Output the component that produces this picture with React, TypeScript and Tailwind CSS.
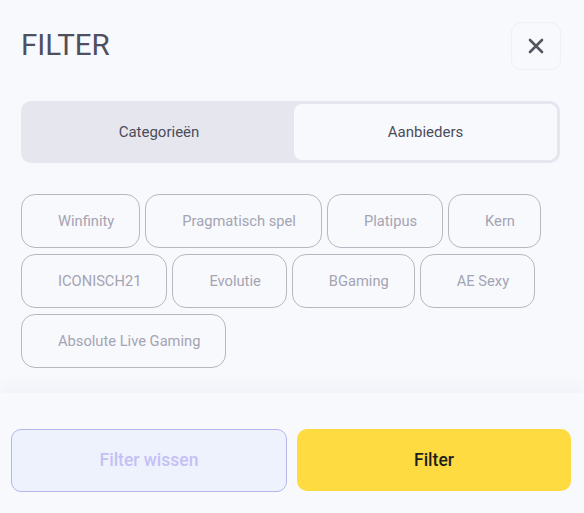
import { useState } from 'react';

const providers = [
  'Winfinity',
  'Pragmatisch spel',
  'Platipus',
  'Kern',
  'ICONISCH21',
  'Evolutie',
  'BGaming',
  'AE Sexy',
  'Absolute Live Gaming',
];

const App = () => {
  const [tab, setTab] = useState<'cat' | 'prov'>('prov');
  const [selected, setSelected] = useState<string[]>([]);

  const toggle = (name: string) => {
    setSelected((s) => (s.includes(name) ? s.filter((x) => x !== name) : [...s, name]));
  };

  return (
    <div
      className="w-[584px] h-[513px] bg-[#f7f9fd] flex flex-col overflow-hidden"
      style={{ fontFamily: 'Roboto, "Liberation Sans", sans-serif' }}
    >
      <div className="flex-1 pl-[21px] pr-[24px]">
        <div className="flex items-center justify-between pt-[22px]">
          <h1 className="text-[29.5px] leading-none text-[#4f4f5d] font-normal">FILTER</h1>
          <button className="w-[50px] h-[48px] mr-[-1px] rounded-[10px] border border-[#eef0f5] bg-[#f8f9fd] flex items-center justify-center">
            <svg width="16" height="16" viewBox="0 0 16 16" fill="none">
              <path d="M2 2L14 14M14 2L2 14" stroke="#55555f" strokeWidth="2.6" strokeLinecap="round" />
            </svg>
          </button>
        </div>

        <div className="mt-[31px] h-[62px] rounded-[10px] bg-[#e6e7ee] p-[3px] flex">
          <button
            onClick={() => setTab('cat')}
            className={`w-[270px] rounded-[8px] text-[15px] text-[#4c4c5a] ${tab === 'cat' ? 'bg-[#f8f9fd]' : ''}`}
          >
            Categorieën
          </button>
          <button
            onClick={() => setTab('prov')}
            className={`flex-1 rounded-[8px] text-[15px] text-[#4c4c5a] ${tab === 'prov' ? 'bg-[#f8f9fd]' : ''}`}
          >
            Aanbieders
          </button>
        </div>

        <div className="mt-[31px] flex flex-wrap gap-x-[5px] gap-y-[6px]">
          {providers.map((p) => (
            <button
              key={p}
              onClick={() => toggle(p)}
              className={`h-[54px] pl-[36px] pr-[25px] rounded-[14px] border text-[14.7px] ${
                selected.includes(p) ? 'border-[#4c4c5a] text-[#4c4c5a]' : 'border-[#b7b7c2] text-[#a4a4b2]'
              }`}
            >
              {p}
            </button>
          ))}
        </div>
      </div>

      <div className="h-[120px] shrink-0 flex gap-[10px] pl-[11px] pr-[13px] pt-[36px] shadow-[0_-10px_14px_rgba(40,40,80,0.025)]">
        <button className="flex-1 h-[63px] rounded-[10px] border border-[#b7b4ec] bg-[#eef2fd] text-[17.5px] font-medium text-[#c4c0f5]">
          Filter wissen
        </button>
        <button className="flex-1 h-[62px] rounded-[10px] bg-[#fedb41] text-[17.5px] font-medium text-[#1f1f1f]">
          Filter
        </button>
      </div>
    </div>
  );
};

export default App;
